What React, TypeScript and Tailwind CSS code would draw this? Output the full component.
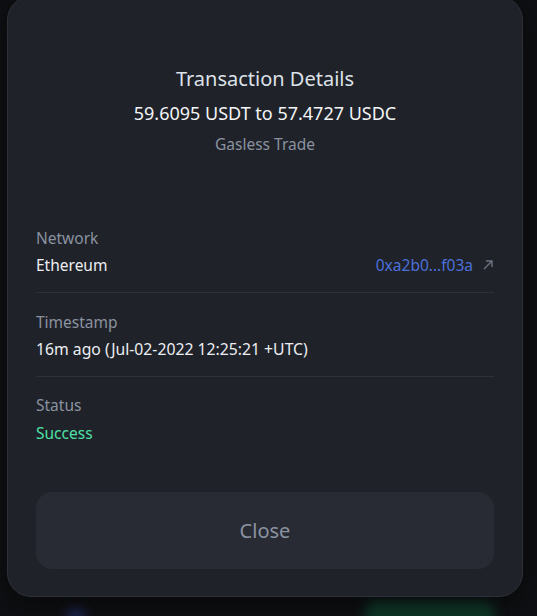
import React from 'react';

const rows = [
  { label: 'Timestamp', value: '16m ago (Jul-02-2022 12:25:21 +UTC)' },
];

const ArrowUpRight = () => (
  <svg width="12" height="12" viewBox="0 0 12 12" fill="none" stroke="currentColor" strokeWidth="1.4">
    <path d="M2 10L10 2M4 2h6v6" />
  </svg>
);

export default function App() {
  return (
    <div
      className="relative h-[616px] w-full overflow-hidden bg-[#0f1013]"
      style={{ fontFamily: '"Noto Sans", "Open Sans", sans-serif' }}
    >
      {/* page behind the dialog */}
      <div className="absolute bottom-[-18px] left-[365px] h-[34px] w-[130px] rounded-xl bg-[#0f3a2a] blur-[6px]" />
      <div className="absolute bottom-[-6px] left-[66px] h-[14px] w-[20px] rounded-full bg-[#1d2550] blur-[5px]" />

      <div className="relative pl-[7px] pr-[14px]">
        <div className="mt-[-4px] flex h-[601px] flex-col rounded-3xl border border-[#2d3038] bg-[#1f2229] px-7 pt-[68px] shadow-[0_8px_30px_rgba(0,0,0,0.5)]">
          <div className="flex flex-col items-center">
            <h2 className="text-[20px] leading-7 text-[#dde1e8]">Transaction Details</h2>
            <p className="mt-[6px] text-[18px] leading-7 text-[#f3f4f6]">59.6095 USDT to 57.4727 USDC</p>
            <p className="mt-[5px] text-[15.5px] leading-6 text-[#8a92a0]">Gasless Trade</p>
          </div>

          <div className="mt-[70px] flex flex-col">
            <div className="border-b border-[#2e3139] pb-[15px]">
              <div className="text-[15.5px] leading-6 text-[#8a92a0]">Network</div>
              <div className="mt-[3px] flex items-center justify-between">
                <span className="text-[15.5px] leading-6 text-[#eceef2]">Ethereum</span>
                <a className="flex items-center gap-[9px] text-[15.5px] leading-6 text-[#4c70d9]">
                  0xa2b0...f03a
                  <span className="text-[#6b7280]">
                    <ArrowUpRight />
                  </span>
                </a>
              </div>
            </div>

            {rows.map((r) => (
              <div key={r.label} className="border-b border-[#2e3139] pb-[15px] pt-[17px]">
                <div className="text-[15.5px] leading-6 text-[#8a92a0]">{r.label}</div>
                <div className="mt-[3px] text-[15.75px] leading-6 text-[#eceef2]">{r.value}</div>
              </div>
            ))}

            <div className="pt-[16px]">
              <div className="text-[15.5px] leading-6 text-[#8a92a0]">Status</div>
              <div className="mt-[4px] text-[15.5px] leading-6 text-[#4ee0a6]">Success</div>
            </div>
          </div>

          <button className="mt-[47px] h-[77px] w-full rounded-2xl bg-[#282b34] text-[20px] text-[#8b93a1]">
            Close
          </button>
        </div>
      </div>
    </div>
  );
}
